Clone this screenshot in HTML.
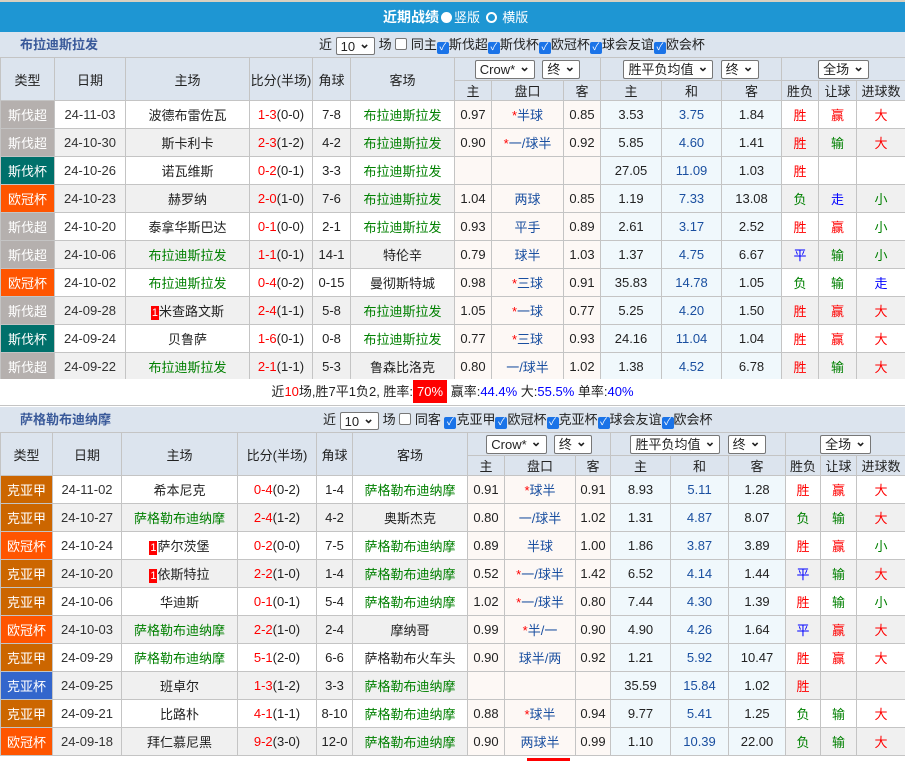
<!DOCTYPE html>
<html><head><meta charset="utf-8">
<style>
*{margin:0;padding:0;box-sizing:border-box}
body{width:905px;height:761px;overflow:hidden;background:#fff;font-family:"Liberation Sans","Noto Sans CJK SC",sans-serif;font-size:13px;color:#222;position:relative}
.top{position:absolute;left:0;top:0;width:905px;height:32px;background:#1e96d3;border-top:2px solid #d8d0c0;color:#fff;font-size:14px;line-height:30px}
.tt{position:absolute;left:383px;top:0;white-space:nowrap}
.rad{display:inline-block;width:11px;height:11px;border-radius:50%;border:2px solid #fff;vertical-align:-1px;margin:0 2px}
.sec{position:absolute;left:0;width:905px;height:25px;background:#dce4ee;line-height:25px}
.sec .t{position:absolute;left:20px;color:#3a5a9a;font-weight:bold;font-size:13px}
.sec .c{position:absolute;font-size:13px;white-space:nowrap}
.sel{display:inline-block;border:1px solid #777;border-radius:2px;background:#fff;height:19px;line-height:17px;padding:0 4px;font-size:13px;vertical-align:middle}
.sel:after{content:"⌄";font-weight:bold;margin-left:4px;position:relative;top:-3px}
.cb{display:inline-block;width:12px;height:12px;border-radius:2px;background:#1a73e8;color:#fff;font-size:10px;line-height:12px;text-align:center;vertical-align:-1px}
.cbo{display:inline-block;width:12px;height:12px;border-radius:2px;border:1px solid #777;background:#fff;vertical-align:-1px}
table{position:absolute;left:0;border-collapse:collapse;table-layout:fixed;font-size:13px}
td{border:1px solid #c4c4c4;text-align:center;white-space:nowrap;overflow:hidden;height:28px;padding:0}
tr.h td{background:#dce4ee;height:23px}
tr.h2 td{background:#dce4ee;height:19px}
tr.a td{background:#fff}tr.b td{background:#f0f0f0}
tr.a td.o1,tr.b td.o1{background:#fdf8f5}
tr.a td.o2,tr.b td.o2{background:#f0f8fc}
.ty{color:#fff}
tr td.ty.g1{background:#b5b0ae}tr td.ty.g2{background:#00706b}tr td.ty.g3{background:#ff5500}tr td.ty.g4{background:#cc6600}tr td.ty.g5{background:#3366cc}
.gr{color:#008000}.r{color:#f00}.bl{color:#1a4fa0}.hc{color:#1a4fa0}.st{color:#f00}
.w{color:#f00}.l{color:#008000}.d{color:#00f}
.dt{color:#333}
.n1{display:inline-block;background:#f00;color:#fff;font-size:11px;width:8px;line-height:14px}
.sum{position:absolute;left:0;width:905px;text-align:center;font-size:13px;background:#fff;border-bottom:1px solid #c4c4c4}
.box{background:#f00;color:#fff;padding:4px 4px}
</style></head><body>
<div class="top"><div class="tt"><b>近期战绩</b><span class="rad" style="background:#fff"></span><span style="font-size:13px">竖版 </span><span class="rad"></span><span style="font-size:13px"> 横版</span></div></div>

<div class="sec" style="top:32px"><span class="t">布拉迪斯拉发</span><span class="c" style="left:319px">近 <span class="sel" style="height:18px">10</span> 场 <span class="cbo"></span> 同主<span class="cb">✓</span>斯伐超<span class="cb">✓</span>斯伐杯<span class="cb">✓</span>欧冠杯<span class="cb">✓</span>球会友谊<span class="cb">✓</span>欧会杯</span></div>

<table style="top:57px;width:905px">
<colgroup><col style="width:54px"><col style="width:71px"><col style="width:124px"><col style="width:63px"><col style="width:38px"><col style="width:104px"><col style="width:37px"><col style="width:72px"><col style="width:37px"><col style="width:61px"><col style="width:60px"><col style="width:60px"><col style="width:37px"><col style="width:38px"><col style="width:49px"></colgroup>
<tr class="h"><td rowspan="2">类型</td><td rowspan="2">日期</td><td rowspan="2">主场</td><td rowspan="2">比分(半场)</td><td rowspan="2">角球</td><td rowspan="2">客场</td><td colspan="3"><span class="sel">Crow*</span> &nbsp;<span class="sel">终</span></td><td colspan="3"><span class="sel">胜平负均值</span> &nbsp;<span class="sel">终</span></td><td colspan="3"><span class="sel">全场</span></td></tr>
<tr class="h2"><td>主</td><td>盘口</td><td>客</td><td>主</td><td>和</td><td>客</td><td>胜负</td><td>让球</td><td>进球数</td></tr>
<tr class="a"><td class="ty g1">斯伐超</td><td class="dt">24-11-03</td><td>波德布雷佐瓦</td><td><span class="r">1-3</span>(0-0)</td><td>7-8</td><td class="gr">布拉迪斯拉发</td><td class="o1">0.97</td><td class="o1 hc"><span class="st">*</span>半球</td><td class="o1">0.85</td><td class="o2">3.53</td><td class="o2 bl">3.75</td><td class="o2">1.84</td><td class="w">胜</td><td class="w">赢</td><td class="w">大</td></tr>
<tr class="b"><td class="ty g1">斯伐超</td><td class="dt">24-10-30</td><td>斯卡利卡</td><td><span class="r">2-3</span>(1-2)</td><td>4-2</td><td class="gr">布拉迪斯拉发</td><td class="o1">0.90</td><td class="o1 hc"><span class="st">*</span>一/球半</td><td class="o1">0.92</td><td class="o2">5.85</td><td class="o2 bl">4.60</td><td class="o2">1.41</td><td class="w">胜</td><td class="l">输</td><td class="w">大</td></tr>
<tr class="a"><td class="ty g2">斯伐杯</td><td class="dt">24-10-26</td><td>诺瓦维斯</td><td><span class="r">0-2</span>(0-1)</td><td>3-3</td><td class="gr">布拉迪斯拉发</td><td class="o1"></td><td class="o1"></td><td class="o1"></td><td class="o2">27.05</td><td class="o2 bl">11.09</td><td class="o2">1.03</td><td class="w">胜</td><td></td><td></td></tr>
<tr class="b"><td class="ty g3">欧冠杯</td><td class="dt">24-10-23</td><td>赫罗纳</td><td><span class="r">2-0</span>(1-0)</td><td>7-6</td><td class="gr">布拉迪斯拉发</td><td class="o1">1.04</td><td class="o1 hc">两球</td><td class="o1">0.85</td><td class="o2">1.19</td><td class="o2 bl">7.33</td><td class="o2">13.08</td><td class="l">负</td><td class="d">走</td><td class="l">小</td></tr>
<tr class="a"><td class="ty g1">斯伐超</td><td class="dt">24-10-20</td><td>泰拿华斯巴达</td><td><span class="r">0-1</span>(0-0)</td><td>2-1</td><td class="gr">布拉迪斯拉发</td><td class="o1">0.93</td><td class="o1 hc">平手</td><td class="o1">0.89</td><td class="o2">2.61</td><td class="o2 bl">3.17</td><td class="o2">2.52</td><td class="w">胜</td><td class="w">赢</td><td class="l">小</td></tr>
<tr class="b"><td class="ty g1">斯伐超</td><td class="dt">24-10-06</td><td class="gr">布拉迪斯拉发</td><td><span class="r">1-1</span>(0-1)</td><td>14-1</td><td>特伦辛</td><td class="o1">0.79</td><td class="o1 hc">球半</td><td class="o1">1.03</td><td class="o2">1.37</td><td class="o2 bl">4.75</td><td class="o2">6.67</td><td class="d">平</td><td class="l">输</td><td class="l">小</td></tr>
<tr class="a"><td class="ty g3">欧冠杯</td><td class="dt">24-10-02</td><td class="gr">布拉迪斯拉发</td><td><span class="r">0-4</span>(0-2)</td><td>0-15</td><td>曼彻斯特城</td><td class="o1">0.98</td><td class="o1 hc"><span class="st">*</span>三球</td><td class="o1">0.91</td><td class="o2">35.83</td><td class="o2 bl">14.78</td><td class="o2">1.05</td><td class="l">负</td><td class="l">输</td><td class="d">走</td></tr>
<tr class="b"><td class="ty g1">斯伐超</td><td class="dt">24-09-28</td><td><span class="n1">1</span>米查路文斯</td><td><span class="r">2-4</span>(1-1)</td><td>5-8</td><td class="gr">布拉迪斯拉发</td><td class="o1">1.05</td><td class="o1 hc"><span class="st">*</span>一球</td><td class="o1">0.77</td><td class="o2">5.25</td><td class="o2 bl">4.20</td><td class="o2">1.50</td><td class="w">胜</td><td class="w">赢</td><td class="w">大</td></tr>
<tr class="a"><td class="ty g2">斯伐杯</td><td class="dt">24-09-24</td><td>贝鲁萨</td><td><span class="r">1-6</span>(0-1)</td><td>0-8</td><td class="gr">布拉迪斯拉发</td><td class="o1">0.77</td><td class="o1 hc"><span class="st">*</span>三球</td><td class="o1">0.93</td><td class="o2">24.16</td><td class="o2 bl">11.04</td><td class="o2">1.04</td><td class="w">胜</td><td class="w">赢</td><td class="w">大</td></tr>
<tr class="b"><td class="ty g1">斯伐超</td><td class="dt">24-09-22</td><td class="gr">布拉迪斯拉发</td><td><span class="r">2-1</span>(1-1)</td><td>5-3</td><td>鲁森比洛克</td><td class="o1">0.80</td><td class="o1 hc">一/球半</td><td class="o1">1.02</td><td class="o2">1.38</td><td class="o2 bl">4.52</td><td class="o2">6.78</td><td class="w">胜</td><td class="l">输</td><td class="w">大</td></tr>
</table>

<div class="sum" style="top:379px;height:27px;line-height:26px">近<span class="r">10</span>场,胜7平1负2, 胜率:<span class="box">70%</span> 赢率:<span class="d">44.4%</span> 大:<span class="d">55.5%</span> 单率:<span class="d">40%</span></div>

<div class="sec" style="top:407px;height:26px"><span class="t">萨格勒布迪纳摩</span><span class="c" style="left:323px">近 <span class="sel" style="height:18px">10</span> 场 <span class="cbo"></span> 同客 <span class="cb">✓</span>克亚甲<span class="cb">✓</span>欧冠杯<span class="cb">✓</span>克亚杯<span class="cb">✓</span>球会友谊<span class="cb">✓</span>欧会杯</span></div>

<table style="top:432px;width:905px">
<colgroup><col style="width:52px"><col style="width:69px"><col style="width:116px"><col style="width:79px"><col style="width:36px"><col style="width:115px"><col style="width:37px"><col style="width:71px"><col style="width:35px"><col style="width:60px"><col style="width:58px"><col style="width:57px"><col style="width:35px"><col style="width:36px"><col style="width:49px"></colgroup>
<tr class="h"><td rowspan="2">类型</td><td rowspan="2">日期</td><td rowspan="2">主场</td><td rowspan="2">比分(半场)</td><td rowspan="2">角球</td><td rowspan="2">客场</td><td colspan="3"><span class="sel">Crow*</span> &nbsp;<span class="sel">终</span></td><td colspan="3"><span class="sel">胜平负均值</span> &nbsp;<span class="sel">终</span></td><td colspan="3"><span class="sel">全场</span></td></tr>
<tr class="h2"><td>主</td><td>盘口</td><td>客</td><td>主</td><td>和</td><td>客</td><td>胜负</td><td>让球</td><td>进球数</td></tr>
<tr class="a"><td class="ty g4">克亚甲</td><td class="dt">24-11-02</td><td>希本尼克</td><td><span class="r">0-4</span>(0-2)</td><td>1-4</td><td class="gr">萨格勒布迪纳摩</td><td class="o1">0.91</td><td class="o1 hc"><span class="st">*</span>球半</td><td class="o1">0.91</td><td class="o2">8.93</td><td class="o2 bl">5.11</td><td class="o2">1.28</td><td class="w">胜</td><td class="w">赢</td><td class="w">大</td></tr>
<tr class="b"><td class="ty g4">克亚甲</td><td class="dt">24-10-27</td><td class="gr">萨格勒布迪纳摩</td><td><span class="r">2-4</span>(1-2)</td><td>4-2</td><td>奥斯杰克</td><td class="o1">0.80</td><td class="o1 hc">一/球半</td><td class="o1">1.02</td><td class="o2">1.31</td><td class="o2 bl">4.87</td><td class="o2">8.07</td><td class="l">负</td><td class="l">输</td><td class="w">大</td></tr>
<tr class="a"><td class="ty g3">欧冠杯</td><td class="dt">24-10-24</td><td><span class="n1">1</span>萨尔茨堡</td><td><span class="r">0-2</span>(0-0)</td><td>7-5</td><td class="gr">萨格勒布迪纳摩</td><td class="o1">0.89</td><td class="o1 hc">半球</td><td class="o1">1.00</td><td class="o2">1.86</td><td class="o2 bl">3.87</td><td class="o2">3.89</td><td class="w">胜</td><td class="w">赢</td><td class="l">小</td></tr>
<tr class="b"><td class="ty g4">克亚甲</td><td class="dt">24-10-20</td><td><span class="n1">1</span>依斯特拉</td><td><span class="r">2-2</span>(1-0)</td><td>1-4</td><td class="gr">萨格勒布迪纳摩</td><td class="o1">0.52</td><td class="o1 hc"><span class="st">*</span>一/球半</td><td class="o1">1.42</td><td class="o2">6.52</td><td class="o2 bl">4.14</td><td class="o2">1.44</td><td class="d">平</td><td class="l">输</td><td class="w">大</td></tr>
<tr class="a"><td class="ty g4">克亚甲</td><td class="dt">24-10-06</td><td>华迪斯</td><td><span class="r">0-1</span>(0-1)</td><td>5-4</td><td class="gr">萨格勒布迪纳摩</td><td class="o1">1.02</td><td class="o1 hc"><span class="st">*</span>一/球半</td><td class="o1">0.80</td><td class="o2">7.44</td><td class="o2 bl">4.30</td><td class="o2">1.39</td><td class="w">胜</td><td class="l">输</td><td class="l">小</td></tr>
<tr class="b"><td class="ty g3">欧冠杯</td><td class="dt">24-10-03</td><td class="gr">萨格勒布迪纳摩</td><td><span class="r">2-2</span>(1-0)</td><td>2-4</td><td>摩纳哥</td><td class="o1">0.99</td><td class="o1 hc"><span class="st">*</span>半/一</td><td class="o1">0.90</td><td class="o2">4.90</td><td class="o2 bl">4.26</td><td class="o2">1.64</td><td class="d">平</td><td class="w">赢</td><td class="w">大</td></tr>
<tr class="a"><td class="ty g4">克亚甲</td><td class="dt">24-09-29</td><td class="gr">萨格勒布迪纳摩</td><td><span class="r">5-1</span>(2-0)</td><td>6-6</td><td>萨格勒布火车头</td><td class="o1">0.90</td><td class="o1 hc">球半/两</td><td class="o1">0.92</td><td class="o2">1.21</td><td class="o2 bl">5.92</td><td class="o2">10.47</td><td class="w">胜</td><td class="w">赢</td><td class="w">大</td></tr>
<tr class="b"><td class="ty g5">克亚杯</td><td class="dt">24-09-25</td><td>班卓尔</td><td><span class="r">1-3</span>(1-2)</td><td>3-3</td><td class="gr">萨格勒布迪纳摩</td><td class="o1"></td><td class="o1"></td><td class="o1"></td><td class="o2">35.59</td><td class="o2 bl">15.84</td><td class="o2">1.02</td><td class="w">胜</td><td></td><td></td></tr>
<tr class="a"><td class="ty g4">克亚甲</td><td class="dt">24-09-21</td><td>比路朴</td><td><span class="r">4-1</span>(1-1)</td><td>8-10</td><td class="gr">萨格勒布迪纳摩</td><td class="o1">0.88</td><td class="o1 hc"><span class="st">*</span>球半</td><td class="o1">0.94</td><td class="o2">9.77</td><td class="o2 bl">5.41</td><td class="o2">1.25</td><td class="l">负</td><td class="l">输</td><td class="w">大</td></tr>
<tr class="b"><td class="ty g3">欧冠杯</td><td class="dt">24-09-18</td><td>拜仁慕尼黑</td><td><span class="r">9-2</span>(3-0)</td><td>12-0</td><td class="gr">萨格勒布迪纳摩</td><td class="o1">0.90</td><td class="o1 hc">两球半</td><td class="o1">0.99</td><td class="o2">1.10</td><td class="o2 bl">10.39</td><td class="o2">22.00</td><td class="l">负</td><td class="l">输</td><td class="w">大</td></tr>
</table>
<div style="position:absolute;left:527px;top:758px;width:43px;height:3px;background:#f00"></div>
</body></html>
